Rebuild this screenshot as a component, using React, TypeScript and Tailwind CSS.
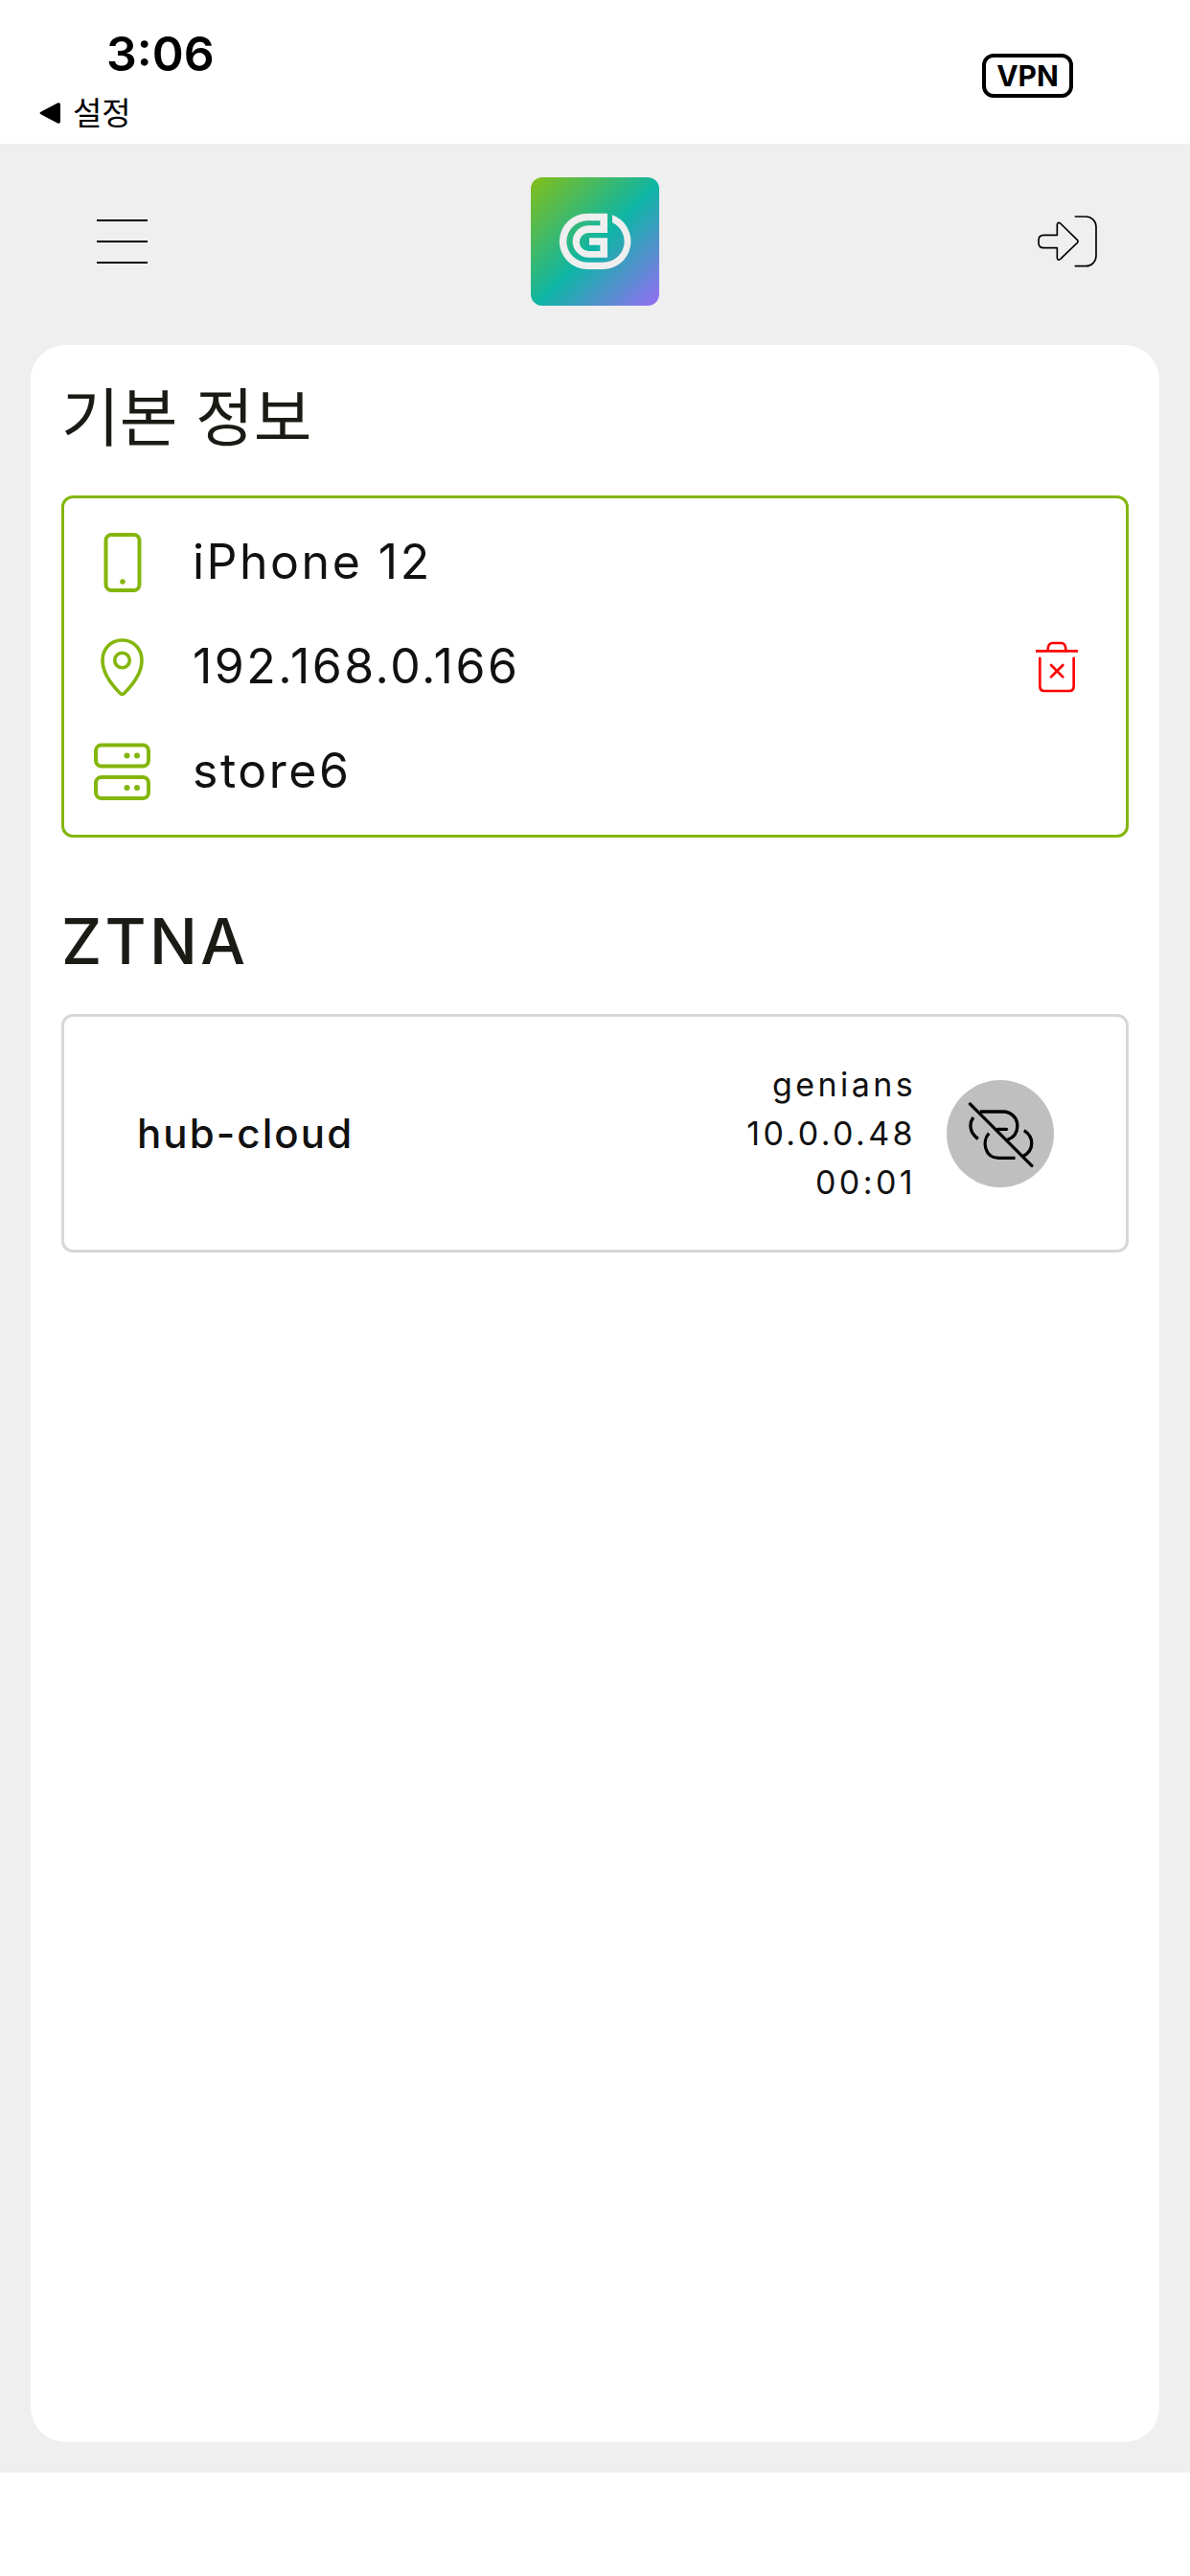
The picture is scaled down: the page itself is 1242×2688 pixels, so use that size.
import React, { useState } from 'react';

interface InfoRow {
  id: string;
  value: string;
  icon: React.ReactNode;
}

const IconMenu = () => (
  <svg className="size-16" viewBox="0 0 64 64" fill="none" stroke="#000" strokeWidth="2">
    <path d="M5 10h53M5 32h53M5 54h53" />
  </svg>
);

const IconLogout = () => (
  <svg className="size-16" viewBox="368 599 192 192" fill="none" stroke="#000" strokeWidth="5" strokeLinecap="round" strokeLinejoin="round">
    <path d="M489 617H522A32 32 0 0 1 554 649V740A32 32 0 0 1 522 772H489" />
    <path d="M432 675H390Q374 675 374 691V699Q374 715 390 715H432V746Q433 756 442 750L495 699Q499 695 495 690L442 638Q433 633 432 643Z" />
  </svg>
);

const Logo = () => (
  <svg className="size-[134px]" viewBox="162 104 402 402" role="img" aria-label="Genians">
    <defs>
      <linearGradient id="logo-bg" x1="0" y1="0" x2="1" y2="1">
        <stop offset="0" stopColor="#84bf17" />
        <stop offset="0.52" stopColor="#0eb5a5" />
        <stop offset="1" stopColor="#976cf5" />
      </linearGradient>
    </defs>
    <rect x="162" y="104" width="402" height="402" rx="36" fill="url(#logo-bg)" />
    <path
      fill="#efefef"
      d="M402 217H339A87.5 87.5 0 0 0 339 392H387A87.5 87.5 0 0 0 417 222V246A65 65 0 0 1 387 370H339A65 65 0 0 1 339 240H379V255H343A50 50 0 0 0 343 355H402V294H345V316H379V335H343A28.5 28.5 0 0 1 343 278H402Z"
    />
  </svg>
);

const IconPhone = () => (
  <svg className="size-16" viewBox="0 0 64 64" fill="none" stroke="#84b60c" strokeWidth="4">
    <rect x="15.5" y="3" width="35" height="58" rx="6" />
    <circle cx="33" cy="52" r="2.8" fill="#84b60c" stroke="none" />
  </svg>
);

const IconPin = () => (
  <svg className="size-16" viewBox="0 0 64 64" fill="none" stroke="#84b60c" strokeWidth="3.6">
    <path d="M32.5 4C20 4 12 13.5 12 25C12 38 22 51 30 59Q32.5 62 35 59C43 51 53 38 53 25C53 13.5 45 4 32.5 4Z" />
    <circle cx="32.5" cy="25" r="7.8" />
  </svg>
);

const IconServer = () => (
  <svg className="size-16" viewBox="0 0 64 64" fill="none" stroke="#84b60c" strokeWidth="4">
    <rect x="5" y="4.5" width="55" height="22" rx="6" />
    <rect x="5" y="38" width="55" height="22" rx="6" />
    <g fill="#84b60c" stroke="none">
      <circle cx="37.5" cy="15.5" r="3" />
      <circle cx="48" cy="15.5" r="3" />
      <circle cx="37.5" cy="49" r="3" />
      <circle cx="48" cy="49" r="3" />
    </g>
  </svg>
);

const IconTrash = () => (
  <svg className="size-16" viewBox="90 97 192 192" fill="none" stroke="#f00" strokeWidth="8">
    <path d="M120 143H252M158 143V137Q159 118 173 118H200Q213 118 214 137V143M133 162V253Q133 268 147 268H225Q239 268 239 253V162" />
    <path d="M168 187L205 224M205 187L168 224" strokeLinecap="round" />
  </svg>
);

const IconUnlink = () => (
  <svg className="size-28" viewBox="84.5 54 336 336" fill="none" stroke="#000" strokeWidth="10">
    <path d="M158 129L351 322" strokeLinecap="round" />
    <path d="M189 153H262A44 44 0 0 1 306 197C306 220 294 234 275 241" />
    <path d="M244 208H272" strokeLinecap="round" />
    <path d="M168 171C154 190 156 220 183 238" />
    <path d="M217 221C195 244 202 298 248 298H299" />
    <path d="M327 212C360 233 358 274 325 292" />
  </svg>
);

const infoRows: InfoRow[] = [
  { id: 'device', value: 'iPhone 12', icon: <IconPhone /> },
  { id: 'ip', value: '192.168.0.166', icon: <IconPin /> },
  { id: 'site', value: 'store6', icon: <IconServer /> },
];

const connection = { name: 'hub-cloud', details: ['genians', '10.0.0.48', '00:01'] };

const StatusBar = () => (
  <div className="flex h-[150px] items-start justify-between pl-10 pr-[122px] text-black">
    <div className="pt-6">
      <div className="pl-[71px] text-[50px] leading-16 font-semibold">3:06</div>
      <a href="#settings" className="flex items-center gap-3 text-[33px] leading-[60px]">
        <svg className="size-6" viewBox="0 0 24 24">
          <path d="M3 10.5L20 1.5Q23 0.5 23 3V21Q23 23.5 20 22.5L3 13.5Q0 12 3 10.5Z" />
        </svg>
        설정
      </a>
    </div>
    <div className="mt-14 flex h-[46px] w-[95px] items-center justify-center rounded-xl border-4 border-black text-[30px] font-bold">
      VPN
    </div>
  </div>
);

const App = () => {
  const [connected, setConnected] = useState(true);

  return (
    <div className="flex min-h-screen flex-col bg-white font-['Inter','Noto_Sans_CJK_KR',sans-serif] text-[#1a1b15]">
      <StatusBar />

      <div className="flex flex-1 flex-col bg-[#efefef] px-8 pb-8">
        <header className="flex items-center justify-between px-16 pt-[35px] pb-[41px]">
          <button aria-label="메뉴"><IconMenu /></button>
          <Logo />
          <button aria-label="로그아웃"><IconLogout /></button>
        </header>

        <main className="flex-1 rounded-[36px] bg-white px-8 pt-9">
          <h2 className="mb-[41px] text-[66px] leading-[80px]">기본 정보</h2>
          <section className="flex items-center justify-between rounded-xl border-3 border-[#84b60c] py-3 pr-10 pl-7">
            <ul>
              {infoRows.map((row) => (
                <li key={row.id} className="flex h-[109px] items-center gap-[42px] text-[50px] tracking-wider text-[#111]">
                  {row.icon}
                  {row.value}
                </li>
              ))}
            </ul>
            <button aria-label="삭제"><IconTrash /></button>
          </section>

          <h2 className="mt-[68px] mb-9 text-[66px] leading-[80px] font-medium tracking-wider">ZTNA</h2>
          <section className="flex items-center justify-between rounded-xl border-3 border-[#d7d7d7] py-[45px] pr-[75px] pl-[76px] text-[#111]">
            <span className="text-[42px] font-medium tracking-wider">{connection.name}</span>
            <div className="flex items-center gap-8">
              <div className="text-right text-[34px] leading-[51px] tracking-widest">
                {connection.details.map((line) => (
                  <p key={line}>{line}</p>
                ))}
              </div>
              <button
                aria-label="연결"
                aria-pressed={connected}
                onClick={() => setConnected(!connected)}
                className="rounded-full bg-[#bfbfbf]"
              >
                <IconUnlink />
              </button>
            </div>
          </section>
        </main>
      </div>

      <div className="h-27" />
    </div>
  );
};

export default App;
